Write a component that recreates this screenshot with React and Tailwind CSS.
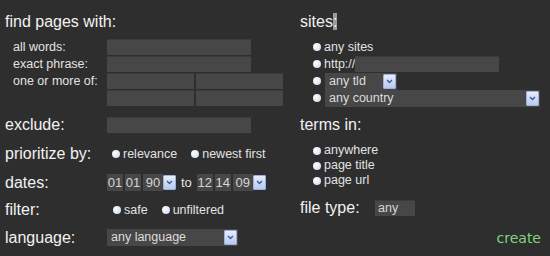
import React from "react";

const Dot = () => (
  <span className="w-2 h-2 rounded-full shrink-0 bg-[radial-gradient(circle_at_35%_35%,#ffffff,#c8d4e4)]" />
);

const Radio = ({ label, className = "" }) => (
  <span className={"flex items-center gap-[3px] text-[12.5px] text-[#e2e2e2] " + className}>
    <Dot />
    {label}
  </span>
);

const DropBtn = () => (
  <span className="flex items-center justify-center w-[13px] h-[15px] shrink-0 border border-[#9cb0da] bg-linear-to-b from-[#e6edfb] to-[#b8caf0] rounded-[1px]">
    <svg width="7" height="5" viewBox="0 0 7 5">
      <path d="M1 1l2.5 2.5L6 1" stroke="#3d5b92" strokeWidth="1.4" fill="none" />
    </svg>
  </span>
);

const Field = ({ className = "", children }) => (
  <div className={"h-4 bg-[#474747] border-t border-[#3b3b3b] text-[12.5px] text-[#d6d6d6] flex items-center " + className}>
    {children}
  </div>
);

const Select = ({ label, className = "" }) => (
  <div className={"h-[17px] bg-[#474747] flex items-center justify-between pl-1 pr-px text-[12.5px] text-[#dcdcdc] " + className}>
    <span>{label}</span>
    <DropBtn />
  </div>
);

const Box = ({ v, w = "w-4" }) => (
  <span className={"h-[17px] bg-[#474747] flex items-center justify-center text-[13px] text-[#d6d6d6] " + w}>{v}</span>
);

export default function App() {
  return (
    <div
      className="w-[550px] h-[256px] bg-[#2e2e2e] flex pl-[5px] text-[#f2f2f2] overflow-hidden"
      style={{ fontFamily: '"Liberation Sans", Arial, sans-serif' }}
    >
      {/* left column */}
      <div className="w-[295px] flex flex-col">
        <div className="h-[39px] pt-[13px] text-[16px] leading-[18px]">find pages with:</div>

        <div className="flex flex-col gap-px">
          <div className="flex items-center h-4">
            <span className="w-[102px] pl-2 text-[12.5px] text-[#e2e2e2]">all words:</span>
            <Field className="w-[144px]" />
          </div>
          <div className="flex items-center h-4">
            <span className="w-[102px] pl-2 text-[12.5px] text-[#e2e2e2]">exact phrase:</span>
            <Field className="w-[144px]" />
          </div>
          <div className="flex items-center h-4">
            <span className="w-[102px] pl-2 text-[12.5px] text-[#e2e2e2]">one or more of:</span>
            <Field className="w-[87px]" />
            <Field className="w-[87px] ml-[2px]" />
          </div>
          <div className="flex items-center h-4">
            <span className="w-[102px]" />
            <Field className="w-[87px]" />
            <Field className="w-[87px] ml-[2px]" />
          </div>
        </div>

        <div className="flex items-center h-4 mt-[11px]">
          <span className="w-[102px] text-[16px]">exclude:</span>
          <Field className="w-[144px]" />
        </div>

        <div className="flex items-center h-4 mt-[13px]">
          <span className="w-[102px] text-[16px]">prioritize by:</span>
          <Radio label="relevance" className="ml-[5px]" />
          <Radio label="newest first" className="ml-[14px]" />
        </div>

        <div className="flex items-center h-[17px] mt-3">
          <span className="w-[102px] text-[16px]">dates:</span>
          <div className="flex items-center gap-[2px]">
            <Box v="01" />
            <Box v="01" />
            <span className="flex items-center">
              <Box v="90" w="w-5" />
              <DropBtn />
            </span>
            <span className="text-[13px] text-[#e2e2e2] mx-[3px]">to</span>
            <Box v="12" />
            <Box v="14" />
            <span className="flex items-center">
              <Box v="09" w="w-5" />
              <DropBtn />
            </span>
          </div>
        </div>

        <div className="flex items-center h-4 mt-[11px]">
          <span className="w-[102px] text-[16px]">filter:</span>
          <Radio label="safe" className="ml-[6px]" />
          <Radio label="unfiltered" className="ml-[14px]" />
        </div>

        <div className="flex items-center h-[17px] mt-[11px]">
          <span className="w-[102px] text-[16px]">language:</span>
          <Select label="any language" className="w-[131px]" />
        </div>
      </div>

      {/* right column */}
      <div className="flex-1 flex flex-col">
        <div className="h-[39px] pt-[13px] text-[16px] leading-[18px]">
          sites<span className="bg-[#9b9b9b]">:</span>
        </div>

        <div className="flex flex-col gap-px pl-[13px]">
          <div className="flex items-center h-4">
            <Radio label="any sites" />
          </div>
          <div className="flex items-center h-4">
            <Radio label="http://" />
            <Field className="w-[144px]" />
          </div>
          <div className="flex items-center h-4 gap-1">
            <Dot />
            <Select label="any tld" className="w-[72px]" />
          </div>
          <div className="flex items-center h-4 gap-1">
            <Dot />
            <Select label="any country" className="w-[215px]" />
          </div>
        </div>

        <div className="flex items-center h-4 mt-[11px] text-[16px]">terms in:</div>

        <div className="flex flex-col pl-[13px] mt-[10px]">
          <div className="flex items-center h-[15px]">
            <Radio label="anywhere" />
          </div>
          <div className="flex items-center h-[15px]">
            <Radio label="page title" />
          </div>
          <div className="flex items-center h-[15px]">
            <Radio label="page url" />
          </div>
        </div>

        <div className="flex items-center h-4 mt-3">
          <span className="w-[75px] text-[16px]">file type:</span>
          <Field className="w-10 pl-[3px]">any</Field>
        </div>

        <div className="flex items-center justify-end h-4 mt-[14px] pr-[9px]">
          <span
            className="text-[14px] text-[#7fd57f]"
            style={{ fontFamily: '"DejaVu Sans", Verdana, sans-serif' }}
          >
            create
          </span>
        </div>
      </div>
    </div>
  );
}
